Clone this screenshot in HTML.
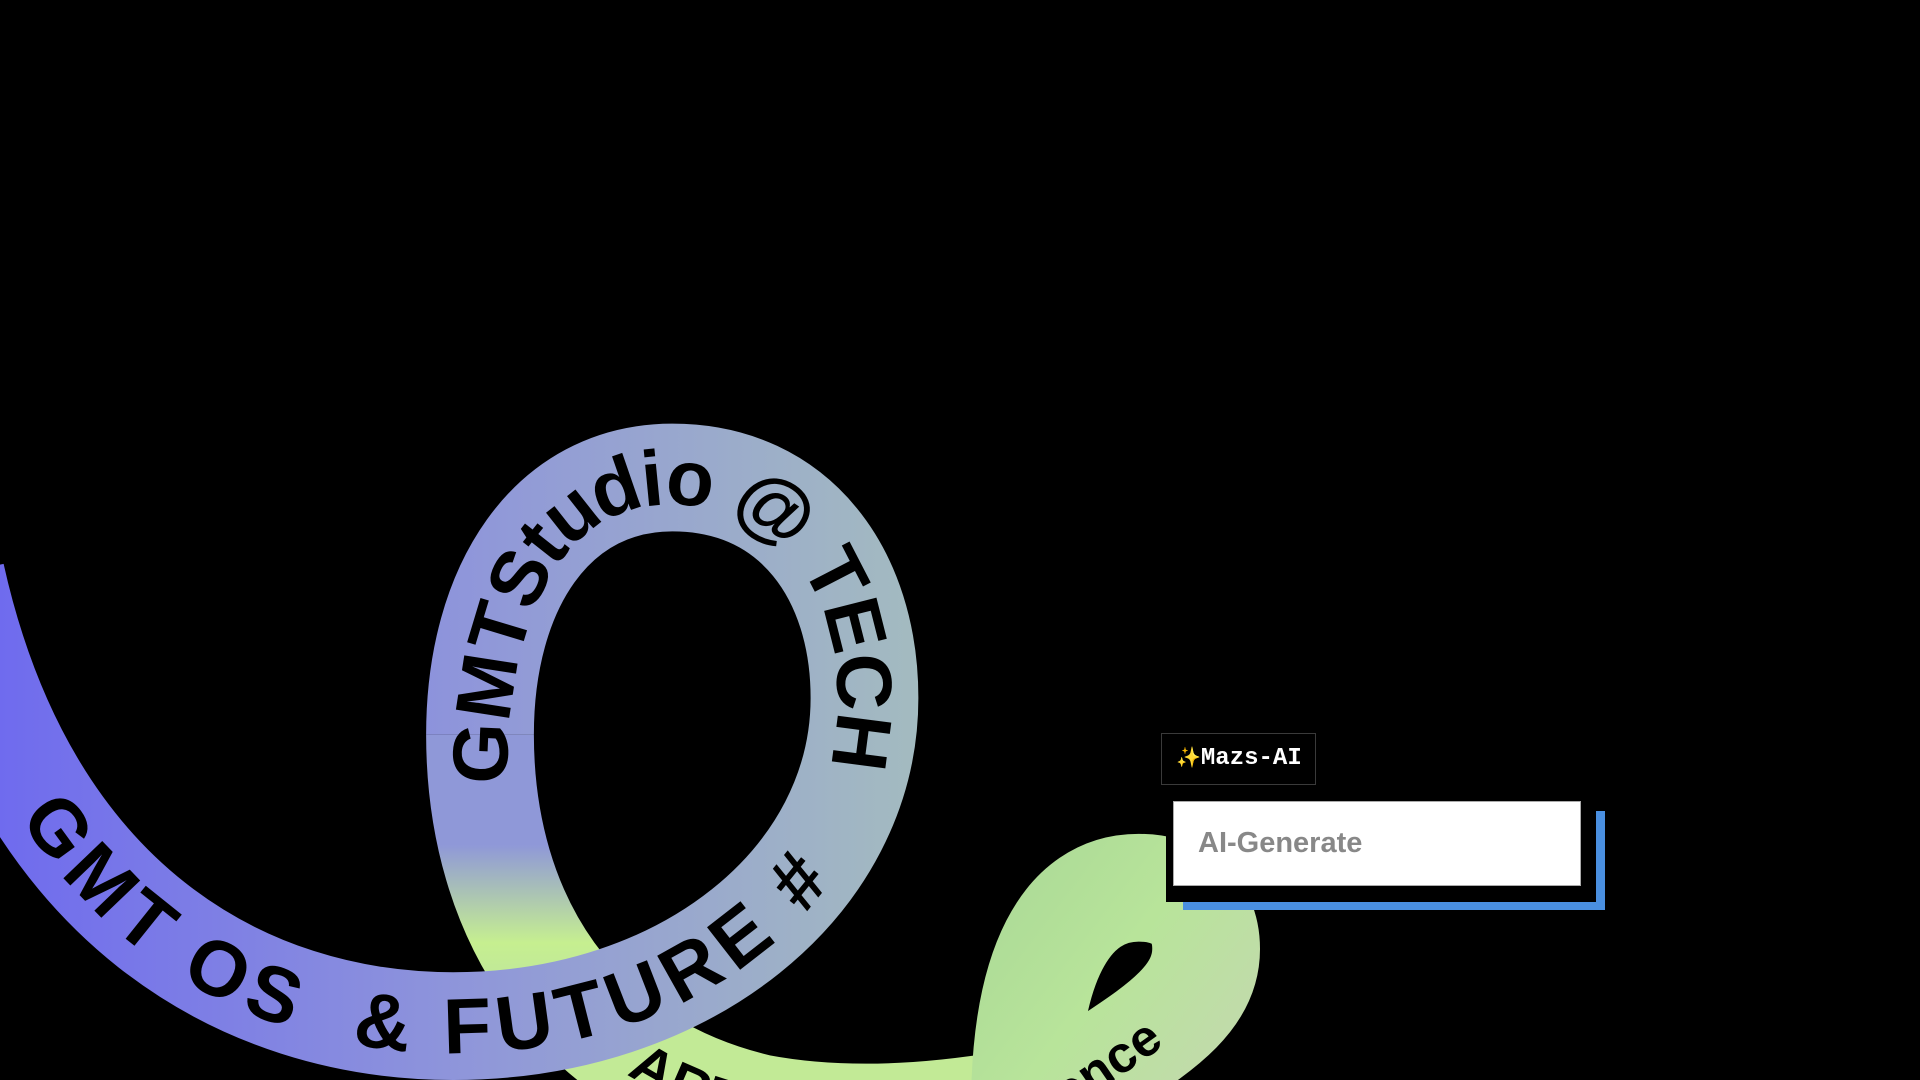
<!DOCTYPE html>
<html><head><meta charset="utf-8"><style>
html,body{margin:0;padding:0;background:#000;width:1920px;height:1080px;overflow:hidden}
svg{position:absolute;left:0;top:0}
.mz{position:absolute;left:1161px;top:733px;width:155px;height:52px;border:1px solid #3a3a3a;box-sizing:border-box;background:#000;color:#fff;font:bold 24px "Liberation Mono",monospace;line-height:50px;padding-left:14px;white-space:nowrap;overflow:hidden}
.mz span{color:#f5c518;font-size:20px}
.blue{position:absolute;left:1183px;top:811px;width:422px;height:99px;background:#4a8fe0}
.blk{position:absolute;left:1166px;top:795px;width:430px;height:107px;background:#000}
.wh{position:absolute;left:1173px;top:801px;width:408px;height:85px;background:#fff;border:1px solid #aaa;box-sizing:border-box;font:bold 29px "Liberation Sans",sans-serif;color:#888;padding-left:24px;line-height:82px}
</style></head><body>
<svg width="1920" height="1080" viewBox="0 0 1568 882" overflow="hidden">
<defs>
<linearGradient id="g1" gradientUnits="userSpaceOnUse" x1="0" y1="0" x2="760" y2="0">
<stop offset="0" stop-color="#6f6bee"/><stop offset="0.5" stop-color="#8f96da"/><stop offset="1" stop-color="#a4bcbf"/></linearGradient>
<linearGradient id="g2" gradientUnits="userSpaceOnUse" x1="0" y1="690" x2="0" y2="790">
<stop offset="0" stop-color="#8f98d8"/><stop offset="0.8" stop-color="#c6ef90"/><stop offset="1" stop-color="#c2ea96"/></linearGradient>
<linearGradient id="g3" gradientUnits="userSpaceOnUse" x1="790" y1="700" x2="1030" y2="882">
<stop offset="0" stop-color="#a9d896"/><stop offset="0.5" stop-color="#b8e49a"/><stop offset="1" stop-color="#c4d8b0"/></linearGradient>
<path id="all" d="M-40,470 C20,740 200,838 370,838 C560,838 706,720 706,570 C706,470 650,390 549,390 C450,390 392,480 392,600"/>
<path id="pd" d="M392,600 C392,750 470,870 620,905 C700,920 780,910 837,900"/>
<path id="pm" d="M-40,470 C20,740 200,838 370,838 C560,838 706,720 706,570"/>
<path id="pr" d="M392,640 C392,480 450,390 549,390 C650,390 706,470 706,570 C706,600 700,640 690,660"/>
<path id="pl" d="M837,905 C837,790 870,725 930,725 C960,725 985,740 985,775 C985,835 900,860 850,910"/>
<path id="plr" d="M850,910 C900,860 985,835 985,775"/>
</defs>
<g font-family="Liberation Sans, sans-serif" font-weight="bold" fill="#000" dominant-baseline="central">
<use href="#pd" stroke="url(#g2)" stroke-width="88" fill="none"/>
<use href="#pl" stroke="url(#g3)" stroke-width="88" fill="none"/>
<text font-size="46"><textPath href="#pd" startOffset="305">ARTIFICIAL</textPath></text>
<text font-size="42"><textPath href="#plr" startOffset="20">ence</textPath></text>
<use href="#all" stroke="url(#g1)" stroke-width="88" fill="none"/>
<text font-size="64" letter-spacing="3"><textPath href="#pr" startOffset="0">GMTStudio @ TECH</textPath></text>
<text font-size="64" letter-spacing="4" xml:space="preserve"><textPath href="#pm" startOffset="200">GMT OS  &amp; FUTURE #</textPath></text>
</g>
</svg>
<div class="mz"><span>✨</span>Mazs-AI</div>
<div class="blue"></div><div class="blk"></div>
<div class="wh">AI-Generate</div>
</body></html>
